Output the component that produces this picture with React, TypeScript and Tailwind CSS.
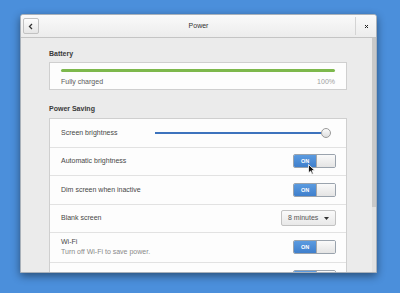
function Switch() {
  return (
    <div className="flex h-[14px] w-[43px] overflow-hidden rounded-[2px] border border-[#9aa3ad]">
      <div className="flex w-[22px] items-center justify-center bg-gradient-to-b from-[#5b9be0] to-[#3f7fcc] text-[5.5px] font-bold text-white">
        ON
      </div>
      <div className="flex-1 border-l border-[#a8a8a8] bg-gradient-to-b from-[#fafafa] to-[#e4e4e4]" />
    </div>
  );
}

function Row({ label, sub, children, h = "h-[28.5px]" }: { label: string; sub?: string; children?: React.ReactNode; h?: string }) {
  return (
    <div className={`flex ${h} shrink-0 items-center justify-between border-b border-[#e2e2e2] pl-[11px] pr-[10px]`}>
      <div className="flex flex-col">
        <span className="text-[7px] leading-[10px] text-[#474747]">{label}</span>
        {sub && <span className="text-[7px] leading-[10px] text-[#8a8a8a]">{sub}</span>}
      </div>
      {children}
    </div>
  );
}

export default function App() {
  return (
    <div
      className="relative h-[293px] w-[400px] overflow-hidden bg-[#4b8fdb] pl-[20px] pt-[14px]"
      style={{ fontFamily: '"Liberation Sans", Arial, sans-serif' }}
    >
      {/* window */}
      <div className="flex h-[259px] w-[357px] flex-col overflow-hidden rounded-t-[3px] border border-[#a9b1ba] bg-[#ebebeb] shadow-[0_3px_8px_rgba(0,0,0,0.45)]">
        {/* titlebar */}
        <div className="flex h-[23px] shrink-0 items-center border-b border-[#c4c4c4] bg-gradient-to-b from-[#fafafa] to-[#ececec]">
          <div className="flex w-[21px] items-center pl-[2px]">
            <div className="flex h-[16px] w-[16px] items-center justify-center rounded-[2px] border border-[#c2c2c2] bg-gradient-to-b from-[#fdfdfd] to-[#e6e6e6]">
              <svg width="6" height="7" viewBox="0 0 6 7">
                <path d="M4 1 L1.5 3.5 L4 6" fill="none" stroke="#333" strokeWidth="1.3" />
              </svg>
            </div>
          </div>
          <div className="flex-1 text-center text-[7px] text-[#333]">Power</div>
          <div className="flex h-full w-[21px] items-center">
            <div className="h-[18px] w-px bg-[#d4d4d4]" />
            <div className="flex flex-1 items-center justify-center">
              <svg width="5" height="5" viewBox="0 0 5 5">
                <path d="M1 1 L4 4 M4 1 L1 4" stroke="#222" strokeWidth="1" />
              </svg>
            </div>
          </div>
        </div>

        {/* body */}
        <div className="flex min-h-0 flex-1">
          <div className="flex min-w-0 flex-1 flex-col pl-[28px] pr-[25px] pt-[11px]">
            <div className="mb-[3px] text-[7px] font-bold leading-[10px] text-[#3a3a3a]">Battery</div>
            <div className="shrink-0 border border-[#cfcfcf] bg-[#fdfdfd] px-[11px] pb-[2px] pt-[6px]">
              <div className="h-[3px] rounded-full bg-[#7db84c]" />
              <div className="mt-[5px] flex justify-between text-[7px] leading-[10px]">
                <span className="text-[#5a5a5a]">Fully charged</span>
                <span className="text-[#a0a0a0]">100%</span>
              </div>
            </div>

            <div className="mb-[4px] mt-[14px] text-[7px] font-bold leading-[10px] text-[#3a3a3a]">Power Saving</div>
            <div className="flex shrink-0 flex-col border border-[#cfcfcf] bg-[#fdfdfd]">
              <Row label="Screen brightness">
                <div className="mr-[5px] flex w-[176px] items-center">
                  <div className="h-[2px] flex-1 bg-[#3d73bd]" />
                  <div className="h-[10px] w-[10px] rounded-full border border-[#9a9a9a] bg-gradient-to-b from-[#fbfbfb] to-[#dedede]" />
                </div>
              </Row>
              <Row label="Automatic brightness">
                <Switch />
              </Row>
              <Row label="Dim screen when inactive">
                <Switch />
              </Row>
              <Row label="Blank screen">
                <div className="flex h-[16px] w-[55px] items-center justify-between rounded-[2px] border border-[#c2c2c2] bg-gradient-to-b from-[#fafafa] to-[#e8e8e8] pl-[6px] pr-[6px] text-[7px] text-[#555]">
                  <span>8 minutes</span>
                  <svg width="5" height="3" viewBox="0 0 5 3">
                    <path d="M0 0 L5 0 L2.5 3 Z" fill="#333" />
                  </svg>
                </div>
              </Row>
              <Row label="Wi-Fi" sub="Turn off Wi-Fi to save power." h="h-[29.5px]">
                <Switch />
              </Row>
              <div className="flex h-[28px] items-start justify-between pl-[11px] pr-[10px] pt-[7px]">
                <span className="text-[7px] leading-[10px] text-[#474747]">Bluetooth</span>
                <Switch />
              </div>
            </div>
          </div>
          {/* scrollbar */}
          <div className="w-[4px] shrink-0 bg-[#e2e2e2]">
            <div className="h-[169px] w-full bg-[#c9c9c9]" />
          </div>
        </div>
      </div>

      {/* mouse pointer */}
      <svg className="absolute left-[308px] top-[164px]" width="8" height="11" viewBox="0 0 8 11">
        <path d="M0.5 0.5 L0.5 9 L2.6 7 L4 10.2 L5.3 9.6 L4 6.6 L6.8 6.6 Z" fill="#111" stroke="#fff" strokeWidth="0.8" />
      </svg>
    </div>
  );
}
